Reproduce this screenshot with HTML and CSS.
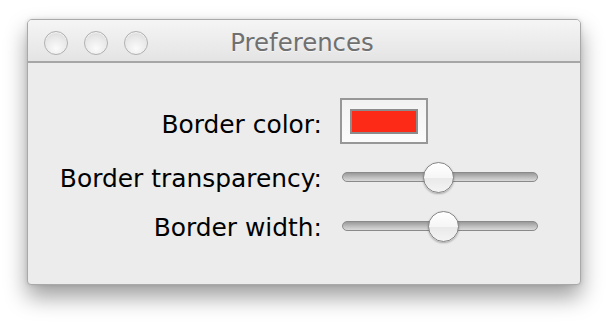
FILE: index.html
```html
<html>
    <head>
        <title>Preferences</title>

        <link rel="stylesheet" href="styles.css">
    </head>
    <body>
        <div class="window">
            <div class="titlebar"> <!-- traffic lights + centered title -->
                <div class="lights">
                    <span class="light"></span>
                    <span class="light"></span>
                    <span class="light"></span>
                </div>
                <div class="title">Preferences</div>
                <div></div>
            </div>

            <div class="content">
                <div class="form">
                    <label class="label rowColor">Border color:</label>
                    <div class="control rowColor">
                        <button class="colorWell"><span class="swatch"></span></button>
                    </div>

                    <label class="label rowSlider">Border transparency:</label>
                    <div class="control rowSlider">
                        <input type="range" class="slider" min="0" max="100" value="49" />
                    </div>

                    <label class="label rowSlider">Border width:</label>
                    <div class="control rowSlider">
                        <input type="range" class="slider" min="0" max="100" value="52" />
                    </div>
                </div>
            </div>
        </div>
    </body>
</html>
```

FILE: styles.css
```css
body{
    margin: 0;
    background: white;
    font-family: "DejaVu Sans", "Liberation Sans", sans-serif;
}

.window{
    margin: 19px 0 0 27px;
    width: 552px;
    height: 264px;
    border: 1px solid #a9a9a9;
    border-radius: 5px 5px 4px 4px;
    background: #ececec;
    box-shadow: 0 12px 22px rgba(0, 0, 0, 0.38), 0 0 4px rgba(0, 0, 0, 0.12);
    overflow: hidden;
}

.titlebar{
    height: 41px;
    display: grid;
    grid-template-columns: 1fr auto 1fr;
    align-items: center;
    background: linear-gradient(#f5f5f5, #e4e4e4);
    border-bottom: 2px solid #a6a6a6;
}

.lights{
    display: flex;
    gap: 16px;
    padding: 2px 0 0 16px;
}

.light{
    width: 22px;
    height: 22px;
    border-radius: 50%;
    border: 1px solid #b0b0b0;
    background: radial-gradient(circle at 50% 75%, #fbfbfb 0%, #e9e9e9 55%, #d4d4d4 100%);
    box-shadow: inset 0 1px 1px rgba(255, 255, 255, 0.8);
}

.title{
    font-size: 24.4px;
    line-height: 41px;
    color: #707070;
    padding: 2px 4px 0 0;
    text-shadow: 0 1px 0 rgba(255, 255, 255, 0.6);
}

.content{
    padding-top: 35px;
}

.form{
    display: grid;
    grid-template-columns: 294px auto;
    column-gap: 18px;
    row-gap: 17px;
}

.label{
    font-size: 24.9px;
    color: black;
    text-align: right;
}

.label.rowColor{
    line-height: 46px;
    padding-top: 4px;
    height: 42px;
}

.label.rowSlider{
    line-height: 32px;
    padding-top: 2px;
    height: 30px;
}

.control{
    display: flex;
    align-items: center;
}

.control.rowSlider{
    height: 32px;
}

/* color well */
.colorWell{
    width: 88px;
    height: 46px;
    padding: 0;
    margin: 0;
    border: 2px solid #979797;
    background: linear-gradient(#f2f2f2, #fbfbfb);
    display: flex;
    align-items: center;
    justify-content: center;
}

.swatch{
    display: block;
    width: 64px;
    height: 21px;
    border: 2px solid #8c8c8c;
    background: #fd2a18;
}

/* sliders */
.slider{
    -webkit-appearance: none;
    appearance: none;
    width: 196px;
    height: 32px;
    margin: 0 0 0 2px;
    background: transparent;
}

.slider::-webkit-slider-runnable-track{
    height: 10px;
    border-radius: 5px;
    border: 1px solid #8a8a8a;
    box-sizing: border-box;
    background: linear-gradient(#999999, #c2c2c2 60%, #d9d9d9);
}

.slider::-webkit-slider-thumb{
    -webkit-appearance: none;
    width: 31px;
    height: 31px;
    margin-top: -11.5px;
    border-radius: 50%;
    border: 1px solid #858585;
    box-sizing: border-box;
    background: linear-gradient(#ffffff, #f6f6f6 50%, #e9e9e9 52%, #f4f4f4);
    box-shadow: 0 1px 2px rgba(0, 0, 0, 0.3);
}
```
